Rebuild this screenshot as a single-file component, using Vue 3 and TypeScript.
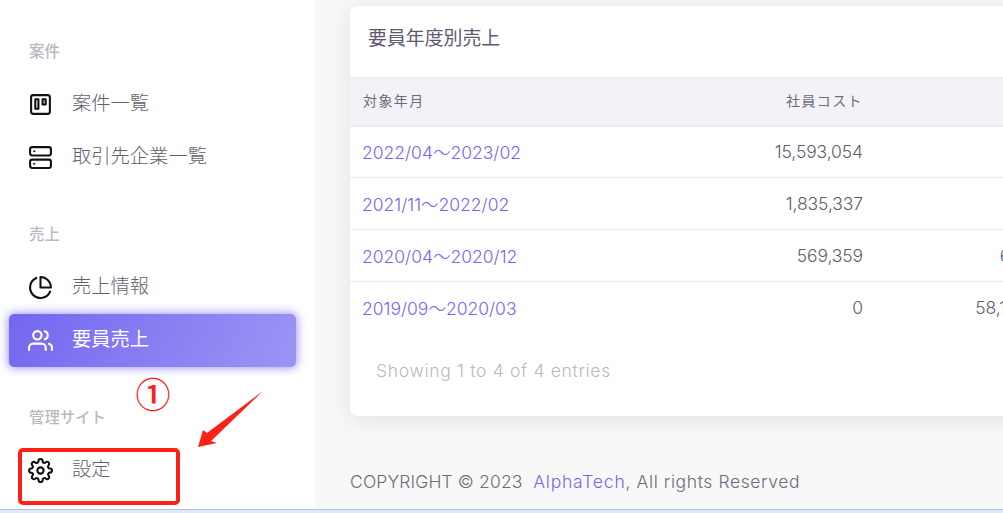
<script setup lang="ts">
interface Row { period: string; cost: string; other: string }
const rows: Row[] = [
  { period: '2022/04～2023/02', cost: '15,593,054', other: '' },
  { period: '2021/11～2022/02', cost: '1,835,337', other: '' },
  { period: '2020/04～2020/12', cost: '569,359', other: '612,340' },
  { period: '2019/09～2020/03', cost: '0', other: '58,120,400' },
]
</script>

<template>
  <div class="page">
    <aside class="side">
      <h6 class="label first">案件</h6>
      <a class="item">
        <svg class="ic" viewBox="0 0 24 24"><rect x="3" y="3" width="18" height="18" rx="2" /><rect x="7" y="7" width="3" height="9" /><rect x="14" y="7" width="3" height="5" /></svg>
        <span>案件一覧</span>
      </a>
      <a class="item">
        <svg class="ic" viewBox="0 0 24 24"><rect x="2" y="2" width="20" height="8" rx="2" /><rect x="2" y="14" width="20" height="8" rx="2" /><line x1="6" y1="6" x2="6.01" y2="6" /><line x1="6" y1="18" x2="6.01" y2="18" /></svg>
        <span>取引先企業一覧</span>
      </a>
      <h6 class="label second">売上</h6>
      <a class="item">
        <svg class="ic" viewBox="0 0 24 24"><path d="M21.21 15.89A10 10 0 1 1 8 2.83" /><path d="M22 12A10 10 0 0 0 12 2v10z" /></svg>
        <span>売上情報</span>
      </a>
      <a class="item active">
        <svg class="ic" viewBox="0 0 24 24"><path d="M17 21v-2a4 4 0 0 0-4-4H5a4 4 0 0 0-4 4v2" /><circle cx="9" cy="7" r="4" /><path d="M23 21v-2a4 4 0 0 0-3-3.87" /><path d="M16 3.13a4 4 0 0 1 0 7.75" /></svg>
        <span>要員売上</span>
      </a>
      <h6 class="label third">管理サイト</h6>
      <a class="item">
        <svg class="ic" viewBox="0 0 24 24"><circle cx="12" cy="12" r="3" /><path d="M19.4 15a1.65 1.65 0 0 0 .33 1.82l.06.06a2 2 0 0 1 0 2.83 2 2 0 0 1-2.83 0l-.06-.06a1.65 1.65 0 0 0-1.82-.33 1.65 1.65 0 0 0-1 1.51V21a2 2 0 0 1-2 2 2 2 0 0 1-2-2v-.09A1.65 1.65 0 0 0 9 19.4a1.65 1.65 0 0 0-1.82.33l-.06.06a2 2 0 0 1-2.83 0 2 2 0 0 1 0-2.83l.06-.06a1.65 1.65 0 0 0 .33-1.82 1.65 1.65 0 0 0-1.51-1H3a2 2 0 0 1-2-2 2 2 0 0 1 2-2h.09A1.65 1.65 0 0 0 4.6 9a1.65 1.65 0 0 0-.33-1.82l-.06-.06a2 2 0 0 1 0-2.83 2 2 0 0 1 2.83 0l.06.06a1.65 1.65 0 0 0 1.82.33H9a1.65 1.65 0 0 0 1-1.51V3a2 2 0 0 1 2-2 2 2 0 0 1 2 2v.09a1.65 1.65 0 0 0 1 1.51 1.65 1.65 0 0 0 1.82-.33l.06-.06a2 2 0 0 1 2.83 0 2 2 0 0 1 0 2.83l-.06.06a1.65 1.65 0 0 0-.33 1.82V9a1.65 1.65 0 0 0 1.51 1H21a2 2 0 0 1 2 2 2 2 0 0 1-2 2h-.09a1.65 1.65 0 0 0-1.51 1z" /></svg>
        <span>設定</span>
      </a>
    </aside>

    <main class="main">
      <section class="card">
        <h4 class="title">要員年度別売上</h4>
        <table class="table">
          <colgroup><col class="c1" /><col class="c2" /><col class="c3" /></colgroup>
          <thead>
            <tr><th>対象年月</th><th class="num">社員コスト</th><th class="num"></th></tr>
          </thead>
          <tbody>
            <tr v-for="r in rows" :key="r.period">
              <td><a class="link">{{ r.period }}</a></td>
              <td class="num">{{ r.cost }}</td>
              <td class="num">{{ r.other }}</td>
            </tr>
          </tbody>
        </table>
        <p class="entries">Showing 1 to 4 of 4 entries</p>
      </section>
      <footer class="foot"><span class="copy">COPYRIGHT © 2023&nbsp;</span> <a class="link brand">AlphaTech</a>, All rights Reserved</footer>
    </main>

    <div class="mark-box"></div>
    <div class="mark-num">①</div>
    <svg class="mark-arrow" viewBox="0 0 70 60"><path d="M66 2 L10 44 L6 41 L1 58 L20 54 L14 52 Z" /></svg>
    <div class="strip"></div>
  </div>
</template>

<style>
html, body { margin: 0; padding: 0; overflow: hidden; }
</style>

<style scoped>
.page {
  position: relative;
  display: flex;
  width: 1003px;
  height: 513px;
  overflow: hidden;
  background: #f8f8f8;
  font-family: Inter, "Open Sans", "Noto Sans CJK JP", sans-serif;
  font-weight: 300;
  color: #6e6b7b;
}
.side {
  flex: 0 0 315px;
  box-sizing: border-box;
  background: #fff;
  padding-left: 9px;
}
.label {
  margin: 0;
  padding-left: 20px;
  height: 20px;
  line-height: 20px;
  font-size: 15.4px;
  font-weight: 500;
  color: #b9b9c3;
  font-family: "Noto Sans CJK JP", sans-serif;
}
.first { margin-top: 40px; margin-bottom: 18px; }
.second { margin-top: 39px; margin-bottom: 18px; }
.third { margin-top: 39px; margin-bottom: 18px; }
.item {
  display: flex;
  align-items: center;
  box-sizing: border-box;
  width: 287px;
  height: 53px;
  padding-left: 19px;
  border-radius: 5px;
  font-family: "Noto Sans CJK JP", sans-serif;
  font-weight: 300;
  font-size: 19.3px;
  color: #625f6e;
}
.item span { margin-left: 19px; margin-bottom: 5px; }
.active {
  color: #fff;
  background: linear-gradient(118deg, #7367f0, rgba(115, 103, 240, 0.7));
  box-shadow: 0 0 10px 1px rgba(115, 103, 240, 0.7);
}
.active span { font-weight: 400; color: #fff; }
.ic {
  flex: none;
  width: 25px;
  height: 25px;
  fill: none;
  stroke: #111;
  stroke-width: 2;
  stroke-linecap: round;
  stroke-linejoin: round;
}
.active .ic { stroke: #fff; }
.main {
  flex: none;
  width: 800px;
  margin-left: 35px;
  padding-top: 6px;
}
.card {
  width: 800px;
  height: 410px;
  background: #fff;
  border-radius: 7px;
  box-shadow: 0 4px 24px rgba(34, 41, 47, 0.1);
}
.title {
  margin: 0;
  height: 71px;
  box-sizing: border-box;
  padding: 17px 0 0 18px;
  line-height: 28px;
  font-family: "Noto Sans CJK JP", sans-serif;
  font-size: 18.9px;
  font-weight: 400;
  color: #5e5873;
}
.table {
  width: 714px;
  table-layout: fixed;
  border-collapse: collapse;
  font-size: 17.5px;
  white-space: nowrap;
}
.c1 { width: 313px; }
.c2 { width: 200px; }
.c3 { width: 201px; }
th {
  height: 48px;
  box-sizing: border-box;
  padding: 0 0 3px 13px;
  background: #f3f2f7;
  border-top: 1px solid #ebe9f1;
  border-bottom: 2px solid #ebe9f1;
  text-align: left;
  font-family: "Noto Sans CJK JP", sans-serif;
  font-size: 14px;
  font-weight: 400;
  letter-spacing: 1.4px;
  color: #6e6b7b;
}
td {
  height: 52px;
  padding: 0 0 0 12px;
  border-bottom: 1px solid #ebe9f1;
  color: #5f5c6c;
  box-sizing: border-box;
}
tbody tr:last-child td { height: 51px; border-bottom: 0; }
th.num, td.num { text-align: right; padding-left: 0; padding-right: 0; letter-spacing: -0.1px; }
th.num { letter-spacing: 1.4px; }
.link { color: #7367f0; }
.entries {
  margin: 0;
  padding: 26px 0 0 26px;
  font-size: 17.5px;
  line-height: 24px;
  letter-spacing: 0.69px;
  color: #b9b9c3;
}
.foot {
  margin-top: 54px;
  line-height: 24px;
  font-size: 17.5px;
  letter-spacing: 0.6px;
  white-space: nowrap;
}
.copy { letter-spacing: 0.15px; }
.brand { letter-spacing: 0.8px; }
.mark-box {
  position: absolute;
  left: 18px;
  top: 448px;
  width: 154px;
  height: 49px;
  border: 4px solid #fb2116;
  border-radius: 5px;
}
.mark-num {
  position: absolute;
  left: 135px;
  top: 375px;
  width: 36px;
  text-align: center;
  font-family: "Noto Sans CJK JP", sans-serif;
  font-size: 35px;
  font-weight: 500;
  line-height: 36px;
  color: #fb2116;
}
.mark-arrow {
  position: absolute;
  left: 197px;
  top: 389px;
  width: 70px;
  height: 60px;
  fill: #fb2116;
}
.strip {
  position: absolute;
  left: 0;
  right: 0;
  bottom: 0;
  height: 4px;
  background: #dfe9f7;
  border-top: 1px solid #b3c0da;
  box-sizing: border-box;
}
</style>
